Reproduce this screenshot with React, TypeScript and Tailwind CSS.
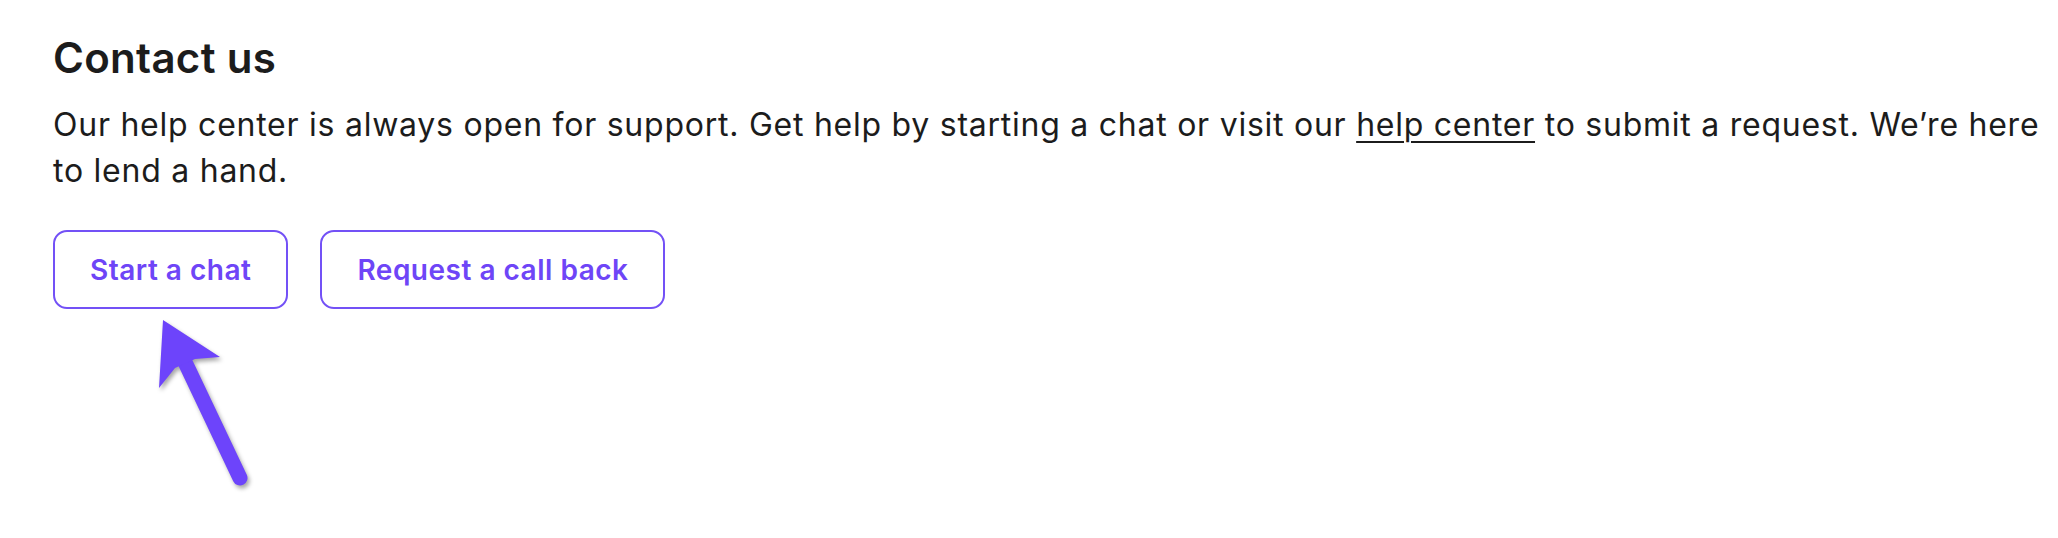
import React from "react";

const font = { fontFamily: "Inter, 'Noto Sans', sans-serif" };

function Arrow() {
  return (
    <svg
      className="absolute left-0 top-0 drop-shadow-[2px_3px_2px_rgba(0,0,0,0.35)]"
      width={300}
      height={520}
      viewBox="0 0 300 520"
    >
      <line x1={184} y1={360} x2={240} y2={478} stroke="#6d44fb" strokeWidth={15} strokeLinecap="round" />
      <polygon points="163,320 220,357 195,359 175,368 159,388" fill="#6d44fb" />
    </svg>
  );
}

export default function App() {
  return (
    <div className="relative min-h-[538px] bg-white pl-[53px] pt-[33px] text-[#1c1c1c]" style={font}>
      <h2 className="text-[42px] leading-[49px] font-semibold tracking-[0.3px]">Contact us</h2>
      <p className="mt-[20px] w-[2000px] text-[32px] leading-[46px] tracking-[0.75px]">
        Our help center is always open for support. Get help by starting a chat or visit our{" "}
        <a href="#" className="underline decoration-2 underline-offset-[5px]">help center</a> to submit a request. We’re here
        to lend a hand.
      </p>
      <div className="mt-[36px] flex gap-[32px]">
        <button className="h-[79px] rounded-[14px] border-2 border-[#7351f6] px-[35px] text-[28px] font-semibold tracking-[0.5px] text-[#6e45f7]">
          Start a chat
        </button>
        <button className="h-[79px] rounded-[14px] border-2 border-[#7351f6] px-[35px] text-[28px] font-semibold tracking-[0.5px] text-[#6e45f7]">
          Request a call back
        </button>
      </div>
      <Arrow />
    </div>
  );
}
